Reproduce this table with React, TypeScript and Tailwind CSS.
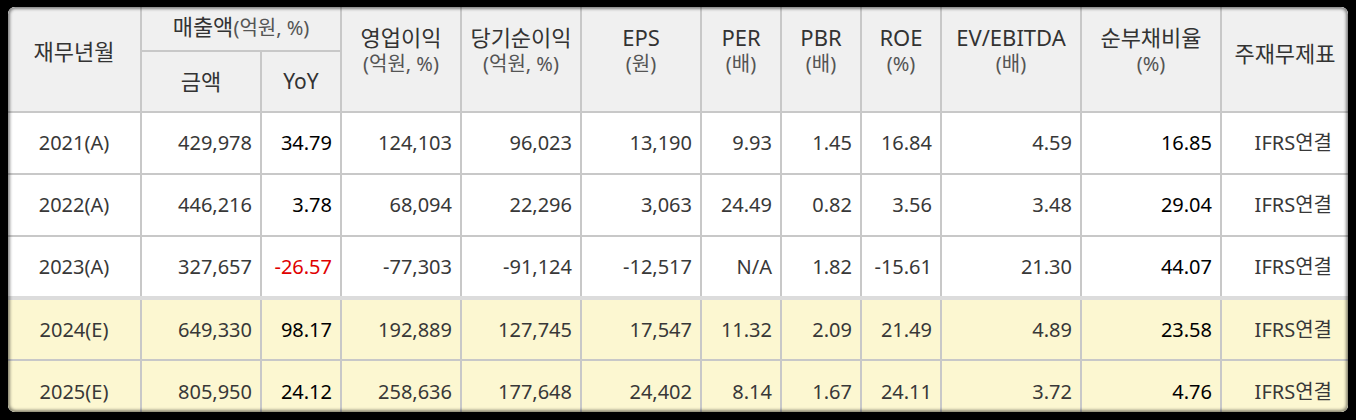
const rows = [
  { year: '2021(A)', sales: '429,978', yoy: '34.79', op: '124,103', net: '96,023', eps: '13,190', per: '9.93', pbr: '1.45', roe: '16.84', ev: '4.59', debt: '16.85', est: false },
  { year: '2022(A)', sales: '446,216', yoy: '3.78', op: '68,094', net: '22,296', eps: '3,063', per: '24.49', pbr: '0.82', roe: '3.56', ev: '3.48', debt: '29.04', est: false },
  { year: '2023(A)', sales: '327,657', yoy: '-26.57', op: '-77,303', net: '-91,124', eps: '-12,517', per: 'N/A', pbr: '1.82', roe: '-15.61', ev: '21.30', debt: '44.07', est: false },
  { year: '2024(E)', sales: '649,330', yoy: '98.17', op: '192,889', net: '127,745', eps: '17,547', per: '11.32', pbr: '2.09', roe: '21.49', ev: '4.89', debt: '23.58', est: true },
  { year: '2025(E)', sales: '805,950', yoy: '24.12', op: '258,636', net: '177,648', eps: '24,402', per: '8.14', pbr: '1.67', roe: '24.11', ev: '3.72', debt: '4.76', est: true },
]

const widths = [133, 120, 80, 120, 120, 120, 80, 80, 80, 140, 140, 127]

const th = 'border-2 border-[#c8c8c8] bg-[#f0f0f0] font-normal text-[#333] text-center align-middle'
const sub = 'block text-[20px] leading-[25px] text-[#555]'

function Head({ title, unit }: { title: string; unit?: string }) {
  return (
    <th rowSpan={2} className={`${th} pb-5`}>
      <span className="block text-[22px] leading-[28px]">{title}</span>
      {unit && <span className={sub}>{unit}</span>}
    </th>
  )
}

export default function App() {
  return (
    <div className="w-[1356px] h-[420px] bg-black pt-[7px] pl-[8px] font-['Noto_Sans','Noto_Sans_CJK_KR',sans-serif]">
      <div className="relative w-[1340px] h-[405px] overflow-hidden rounded-[7px] bg-white">
        <table className="table-fixed border-collapse border-hidden w-[1340px] text-[20px]">
          <colgroup>
            {widths.map((w, i) => (
              <col key={i} style={{ width: w }} />
            ))}
          </colgroup>
          <thead>
            <tr className="h-[44px]">
              <th rowSpan={2} className={`${th} text-[22px] pb-4`}>재무년월</th>
              <th colSpan={2} className={`${th} pb-1`}>
                <span className="text-[22px]">매출액</span>
                <span className="text-[20px] text-[#555]">(억원, %)</span>
              </th>
              <Head title="영업이익" unit="(억원, %)" />
              <Head title="당기순이익" unit="(억원, %)" />
              <Head title="EPS" unit="(원)" />
              <Head title="PER" unit="(배)" />
              <Head title="PBR" unit="(배)" />
              <Head title="ROE" unit="(%)" />
              <Head title="EV/EBITDA" unit="(배)" />
              <Head title="순부채비율" unit="(%)" />
              <th rowSpan={2} className={`${th} text-[22px] pb-3`}>주재무제표</th>
            </tr>
            <tr className="h-[61px]">
              <th className={`${th} text-[22px]`}>금액</th>
              <th className={`${th} text-[21px]`}>YoY</th>
            </tr>
          </thead>
          <tbody>
            {rows.map((r) => {
              const bg = r.est ? 'bg-[#fcf7d1]' : 'bg-white'
              const top = r.year === '2024(E)' ? 'border-t-4 border-t-[#dcdcdc]' : ''
              const td = `border-2 border-[#c8c8c8] ${top} ${bg} text-right pr-2 text-[#383838]`
              return (
                <tr key={r.year} className="h-[62px]">
                  <td className={`border-2 border-[#c8c8c8] ${top} ${bg} text-center text-[#383838]`}>{r.year}</td>
                  <td className={td}>{r.sales}</td>
                  <td className={`${td} ${r.yoy.startsWith('-') ? '!text-[#e00000]' : '!text-black'}`}>{r.yoy}</td>
                  <td className={td}>{r.op}</td>
                  <td className={td}>{r.net}</td>
                  <td className={td}>{r.eps}</td>
                  <td className={td}>{r.per}</td>
                  <td className={td}>{r.pbr}</td>
                  <td className={td}>{r.roe}</td>
                  <td className={td}>{r.ev}</td>
                  <td className={`${td} !text-black`}>{r.debt}</td>
                  <td className={`${td} !pr-4`}>IFRS연결</td>
                </tr>
              )
            })}
          </tbody>
        </table>
        {/* ragged paper edge */}
        <div className="pointer-events-none absolute inset-0 rounded-[7px] shadow-[inset_0_0_3px_2px_rgba(0,0,0,0.45)]" />
      </div>
    </div>
  )
}
